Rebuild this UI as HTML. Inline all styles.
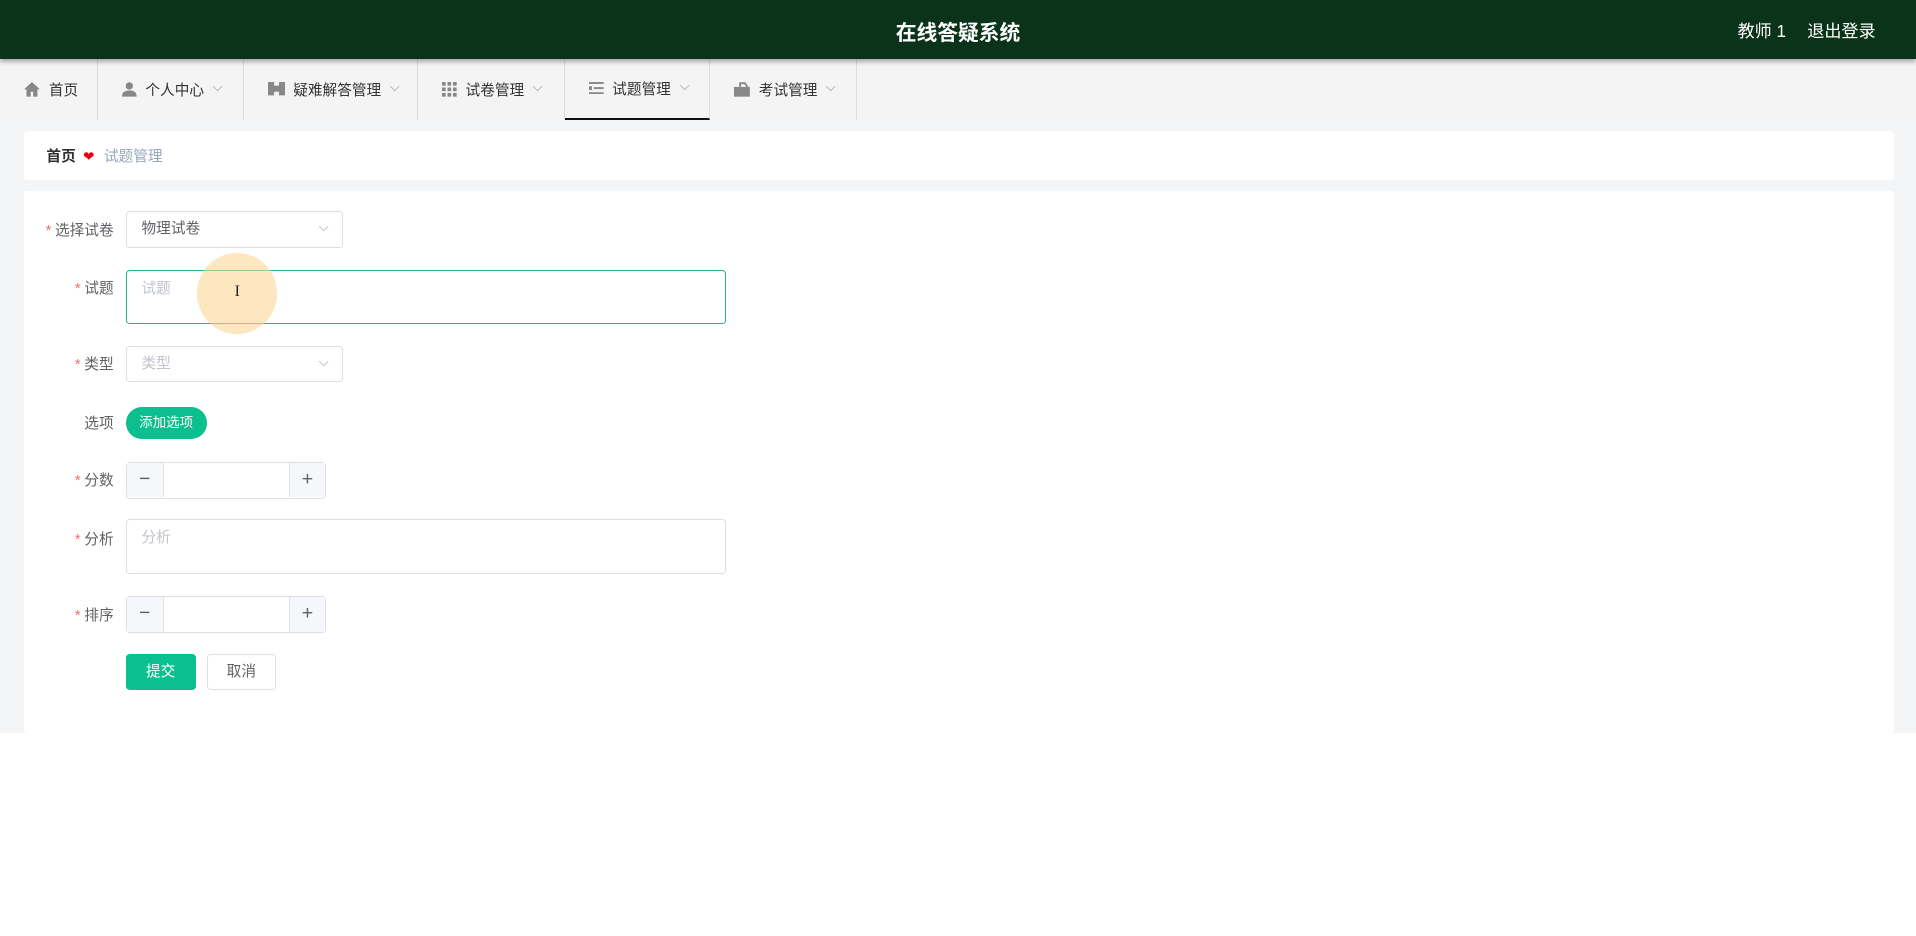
<!DOCTYPE html>
<html><head><meta charset="utf-8"><style>
*{box-sizing:border-box;margin:0;padding:0}
html,body{width:1916px;height:936px;overflow:hidden;background:#fff;font-family:"Liberation Sans","Noto Sans CJK SC",sans-serif}
#w{zoom:1.22194;width:1568px;height:766px;position:relative}
.abs{position:absolute}
.hdr{left:0;top:0;width:1568px;height:48px;background:#0b3319;box-shadow:0 2px 4px rgba(0,0,0,.35);z-index:2}
.title{left:0;width:1568px;top:13px;text-align:center;color:#fff;font-size:17px;font-weight:bold}
.nav{left:0;top:48px;width:1568px;height:50px;background:#f4f4f4}
.it{position:absolute;top:0;height:50px;display:flex;align-items:center;font-size:12px;color:#333;border-right:1px solid #dcdcdc}
.it svg{margin-right:7px}
.chev{margin-left:8px;width:6px;height:6px;border-right:1px solid #bbb;border-bottom:1px solid #bbb;transform:rotate(45deg);margin-top:-4px}
.gray{left:0;top:98px;width:1568px;height:502px;background:#f4f5f7}
.box{background:#fff;border-radius:3px}
.lab{position:absolute;width:93px;text-align:right;font-size:12px;color:#606266}
.lab b{color:#f56c6c;font-weight:normal;margin-right:3px}
.inp{position:absolute;border:1px solid #dcdfe6;border-radius:3px;background:#fff;font-size:12px;color:#c0c4cc;padding-left:12px}
.sel .chev{position:absolute;right:12px;top:9px;border-color:#c0c4cc;margin:0}
.num{position:absolute;width:164px;height:30px;border:1px solid #dcdfe6;border-radius:3px;background:#fff}
.num span{position:absolute;top:0;width:30px;height:28px;background:#f5f7fa;color:#606266;text-align:center;line-height:27px;font-size:16px}
</style></head><body><div id="w">
<div class="abs hdr"><div class="abs title">在线答疑系统</div>
<div class="abs" style="left:1422px;top:14px;color:#fff;font-size:14px">教师 1</div>
<div class="abs" style="left:1479px;top:14px;color:#fff;font-size:14px">退出登录</div></div>
<div class="abs nav">
<div class="it" style="left:0;width:80px;padding-left:20px"><svg width="13" height="12" viewBox="0 0 13 12"><path d="M6.5 0L0 6h2v6h3.5V8h2v4H11V6h2z" fill="#888"/></svg>首页</div>
<div class="it" style="left:80px;width:120px;padding-left:20px"><svg width="12" height="12" viewBox="0 0 12 12"><circle cx="6" cy="3.2" r="3" fill="#888"/><path d="M0 12c0-4 2.5-5 6-5s6 1 6 5z" fill="#888"/></svg>个人中心<i class="chev"></i></div>
<div class="it" style="left:200px;width:142px;padding-left:19px"><svg width="14" height="11" viewBox="0 0 14 11"><path d="M0 0h5v3h4V0h5v11H9V8H5v3H0z" fill="#888"/></svg>疑难解答管理<i class="chev"></i></div>
<div class="it" style="left:342px;width:120px;padding-left:20px"><svg width="12" height="12" viewBox="0 0 12 12" fill="#888"><rect width="3" height="3"/><rect x="4.5" width="3" height="3"/><rect x="9" width="3" height="3"/><rect y="4.5" width="3" height="3"/><rect x="4.5" y="4.5" width="3" height="3"/><rect x="9" y="4.5" width="3" height="3"/><rect y="9" width="3" height="3"/><rect x="4.5" y="9" width="3" height="3"/><rect x="9" y="9" width="3" height="3"/></svg>试卷管理<i class="chev"></i></div>
<div class="it" style="left:462px;width:119px;padding-left:20px;border-bottom:2px solid #111"><svg width="12" height="10" viewBox="0 0 12 10" fill="#888"><rect width="12" height="1.6"/><rect x="4" y="4.2" width="8" height="1.6"/><rect y="8.4" width="12" height="1.6"/><rect y="3.5" width="2.5" height="3"/></svg>试题管理<i class="chev"></i></div>
<div class="it" style="left:581px;width:120px;padding-left:20px"><svg width="13" height="12" viewBox="0 0 13 12"><path d="M0 4h13v8H0z" fill="#888"/><path d="M5 4V1h4l2 3" fill="none" stroke="#888" stroke-width="1.5"/></svg>考试管理<i class="chev"></i></div>
</div>
<div class="abs gray"></div>
<div class="abs box" style="left:20px;top:107px;width:1530px;height:40px"></div>
<div class="abs" style="left:38px;top:119px;font-size:12px;color:#303133;font-weight:bold">首页</div>
<div class="abs" style="left:68px;top:122px;font-size:11px;color:#e60012">❤</div>
<div class="abs" style="left:85px;top:119px;font-size:12px;color:#97a8be">试题管理</div>
<div class="abs box" style="left:20px;top:156px;width:1530px;height:444px"></div>

<div class="lab" style="top:179px"><b>*</b>选择试卷</div>
<div class="inp sel" style="left:103px;top:173px;width:178px;height:30px;line-height:28px;color:#606266">物理试卷<i class="chev"></i></div>

<div class="lab" style="top:227px"><b>*</b>试题</div>
<div class="inp" style="left:103px;top:221px;width:491px;height:44px;border-color:#20b58c;padding-top:5px">试题</div>
<div class="abs" style="left:161px;top:207px;width:66px;height:66px;border-radius:50%;background:rgba(250,215,150,.6)"></div>
<div class="abs" style="left:192px;top:232px;font-size:13px;color:#222;font-family:'Liberation Serif',serif">I</div>

<div class="lab" style="top:289px"><b>*</b>类型</div>
<div class="inp sel" style="left:103px;top:283px;width:178px;height:30px;line-height:28px">类型<i class="chev"></i></div>

<div class="lab" style="top:337px">选项</div>
<div class="abs" style="left:103px;top:333px;width:66px;height:26px;border-radius:13px;background:#0bbf8e;color:#fff;font-size:11px;text-align:center;line-height:26px">添加选项</div>

<div class="lab" style="top:384px"><b>*</b>分数</div>
<div class="num" style="left:103px;top:378px"><span style="left:0;border-right:1px solid #dcdfe6">−</span><span style="right:0;border-left:1px solid #dcdfe6">+</span></div>

<div class="lab" style="top:432px"><b>*</b>分析</div>
<div class="inp" style="left:103px;top:425px;width:491px;height:45px;padding-top:5px">分析</div>

<div class="lab" style="top:494px"><b>*</b>排序</div>
<div class="num" style="left:103px;top:488px"><span style="left:0;border-right:1px solid #dcdfe6">−</span><span style="right:0;border-left:1px solid #dcdfe6">+</span></div>

<div class="abs" style="left:103px;top:535px;width:57px;height:30px;border-radius:3px;background:#0bbf8e;color:#fff;font-size:12px;text-align:center;line-height:30px">提交</div>
<div class="abs" style="left:169px;top:535px;width:57px;height:30px;border-radius:3px;border:1px solid #dcdfe6;color:#606266;font-size:12px;text-align:center;line-height:28px;background:#fff">取消</div>
</div></body></html>
